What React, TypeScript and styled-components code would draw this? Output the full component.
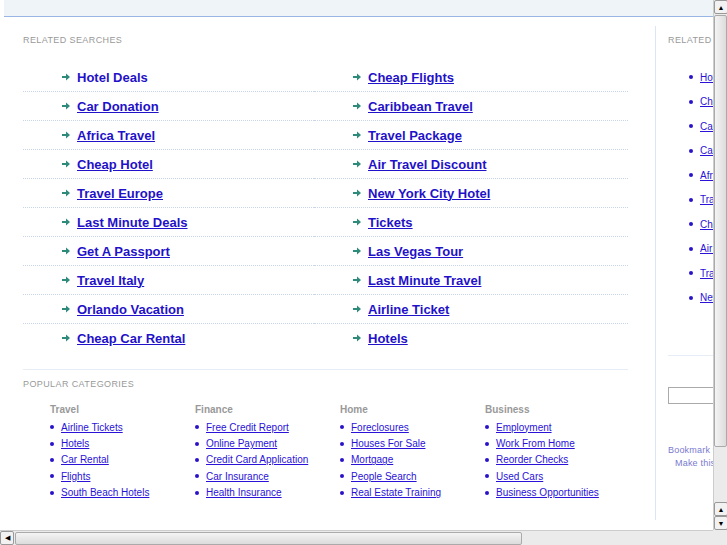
import React from "react";
import styled, { createGlobalStyle } from "styled-components";

const G = createGlobalStyle`
  html,body{margin:0;padding:0;background:#fff;overflow:hidden;}
  body{font-family:"Liberation Sans",Arial,sans-serif;}
`;
const Frame = styled.div`width:727px;height:545px;display:grid;grid-template-columns:713px 14px;grid-template-rows:530px 15px;background:#fff;`;
const View = styled.div`overflow:hidden;position:relative;`;
const Inner = styled.div`width:900px;`;
const TopBar = styled.div`margin-left:4px;height:16px;background:#eff4f9;border-bottom:1px solid #98b6e4;`;
const Body = styled.div`display:flex;padding-top:9px;`;
const Main = styled.div`width:605px;margin-left:23px;padding-right:27px;border-right:1px solid #dbe5f3;height:494px;`;
const Side = styled.div`padding-left:12px;width:200px;`;
const Heading = styled.div`font-size:9px;color:#999;letter-spacing:0.4px;padding-top:9px;height:12px;`;
const Related = styled.div`display:grid;grid-template-columns:291px 314px;margin-top:16px;border-bottom:1px solid #e6edf7;padding-bottom:17px;`;
const Cell = styled.div<{ $last?: boolean; $pad: number }>`height:28px;display:flex;align-items:center;border-bottom:${p => p.$last ? "none" : "1px dotted #c9d6ea"};padding-left:${p => p.$pad}px;`;
const Arrow = styled.svg`width:8px;height:8px;margin-right:7px;`;
const Big = styled.a`font-size:13px;font-weight:bold;color:#1f12c8;text-decoration:none;`;
const BigU = styled(Big)`text-decoration:underline;`;
const Cats = styled.div`display:grid;grid-template-columns:repeat(4,145px);padding-left:27px;margin-top:13px;`;
const CatHead = styled.div`font-size:10px;font-weight:bold;color:#999;height:15px;`;
const Small = styled.a`font-size:10px;color:#2a12d8;text-decoration:underline;white-space:nowrap;`;
const Li = styled.div`display:flex;align-items:center;height:16.4px;`;
const Dot = styled.span`width:4px;height:4px;border-radius:50%;background:#2a12c8;margin-right:7px;flex:none;`;
const SideList = styled.div`margin-top:18px;padding-left:21px;border-bottom:1px solid #e6edf7;padding-bottom:45px;`;
const SLi = styled(Li)`height:24.5px;`;
const Input = styled.div`margin-top:31px;width:80px;height:15px;border:1px solid #aaa;`;
const Note = styled.div<{ $pad: number }>`font-size:9px;color:#7a7ad0;padding-left:${p => p.$pad}px;height:13px;letter-spacing:0.2px;white-space:nowrap;`;
const Gap = styled.div`height:41px;`;
const VBar = styled.div`background:#ebebeb;border-left:1px solid #ccc;display:flex;flex-direction:column;`;
const Btn = styled.div`width:12px;height:12px;border:1px solid #999;border-radius:2px;background:#f2f2f2;display:flex;align-items:center;justify-content:center;font-size:7px;color:#000;flex:none;`;
const VThumb = styled.div`margin:1px 0;border:1px solid #aaa;border-radius:2px;background:linear-gradient(90deg,#f4f4f4,#dcdcdc);height:430px;flex:none;`;
const Fill = styled.div`flex:1;`;
const HBar = styled.div`background:#ebebeb;border-top:1px solid #ccc;display:flex;align-items:center;`;
const HThumb = styled.div`width:505px;height:11px;border:1px solid #aaa;border-radius:2px;background:linear-gradient(#f4f4f4,#dcdcdc);margin-left:1px;`;
const Corner = styled.div`background:#ebebeb;`;

const left = ["Hotel Deals","Car Donation","Africa Travel","Cheap Hotel","Travel Europe","Last Minute Deals","Get A Passport","Travel Italy","Orlando Vacation","Cheap Car Rental"];
const right = ["Cheap Flights","Caribbean Travel","Travel Package","Air Travel Discount","New York City Hotel","Tickets","Las Vegas Tour","Last Minute Travel","Airline Ticket","Hotels"];
const cats: [string, string[]][] = [
  ["Travel",["Airline Tickets","Hotels","Car Rental","Flights","South Beach Hotels"]],
  ["Finance",["Free Credit Report","Online Payment","Credit Card Application","Car Insurance","Health Insurance"]],
  ["Home",["Foreclosures","Houses For Sale","Mortgage","People Search","Real Estate Training"]],
  ["Business",["Employment","Work From Home","Reorder Checks","Used Cars","Business Opportunities"]],
];
const side = ["Hotel Deals","Cheap Flights","Car Donation","Caribbean Travel","Africa Travel","Travel Package","Cheap Hotel","Air Travel Discount","Travel Europe","New York City Hotel"];

const Ar = () => (
  <Arrow viewBox="0 0 8 8"><path d="M0 3h4V0.5L8 4 4 7.5V5H0z" fill="#2e8a7a" /></Arrow>
);

export default function App() {
  const rows: React.ReactNode[] = [];
  left.forEach((l, i) => {
    const last = i === left.length - 1;
    const L = i === 0 ? Big : BigU;
    rows.push(<Cell key={"l"+i} $pad={39} $last={last}><Ar /><L href="#">{l}</L></Cell>);
    rows.push(<Cell key={"r"+i} $pad={39} $last={last}><Ar /><BigU href="#">{right[i]}</BigU></Cell>);
  });
  return (
    <>
      <G />
      <Frame>
        <View>
          <Inner>
            <TopBar />
            <Body>
              <Main>
                <Heading>RELATED SEARCHES</Heading>
                <Related>{rows}</Related>
                <Heading>POPULAR CATEGORIES</Heading>
                <Cats>
                  {cats.map(([h, items]) => (
                    <div key={h}>
                      <CatHead>{h}</CatHead>
                      {items.map(t => <Li key={t}><Dot /><Small href="#">{t}</Small></Li>)}
                    </div>
                  ))}
                </Cats>
              </Main>
              <Side>
                <Heading>RELATED SEARCHES</Heading>
                <SideList>
                  {side.map(t => <SLi key={t}><Dot /><Small href="#">{t}</Small></SLi>)}
                </SideList>
                <Input />
                <Gap />
                <Note $pad={0}>Bookmark this page</Note>
                <Note $pad={7}>Make this your homepage</Note>
              </Side>
            </Body>
          </Inner>
        </View>
        <VBar>
          <Btn>▲</Btn>
          <VThumb />
          <Fill />
          <Btn>▲</Btn>
          <Btn>▼</Btn>
        </VBar>
        <HBar>
          <Btn>◀</Btn>
          <HThumb />
        </HBar>
        <Corner />
      </Frame>
    </>
  );
}
